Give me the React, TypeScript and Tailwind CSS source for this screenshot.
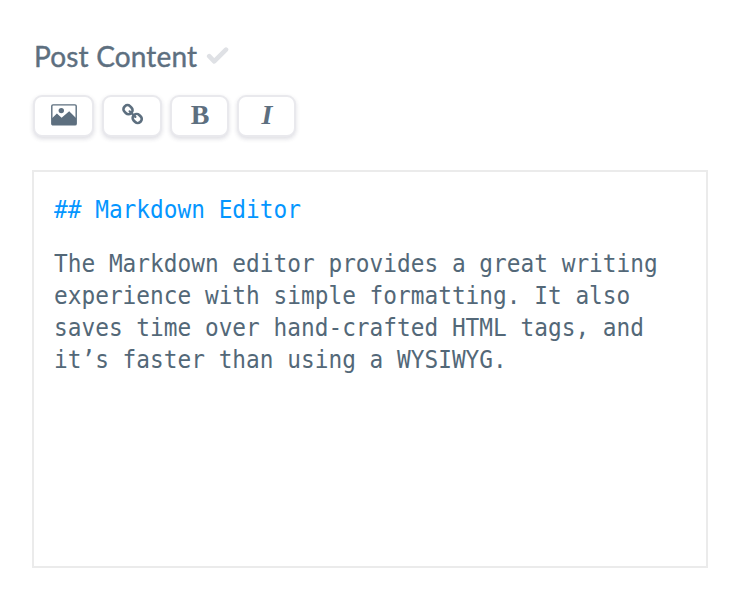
import type { ReactNode } from "react";

function ToolButton({ label, className, children }: { label: string; className: string; children: ReactNode }) {
  return (
    <button
      aria-label={label}
      className={`flex h-[42px] items-start justify-center rounded-[9px] border-2 border-[#e9e9ed] bg-white text-[#5d6f7f] shadow-[0_2px_4px_rgba(50,50,80,0.16)] ${className}`}
    >
      {children}
    </button>
  );
}

function ImageIcon() {
  return (
    <svg className="mt-[7px] h-[22px] w-[26px]" viewBox="0 0 26 22" fill="currentColor">
      <rect x="0.8" y="0.9" width="24.4" height="20" rx="1.2" fill="none" stroke="currentColor" strokeWidth="1.4" />
      <circle cx="10.3" cy="6.6" r="2.7" />
      <path d="M1 14.2 5.9 9.6l4.7 4.2 7.6-6.5 6.8 6.6V21H1Z" />
    </svg>
  );
}

function LinkIcon() {
  return (
    <svg className="mt-[5px] h-[24px] w-[24px]" viewBox="0 0 24 24" fill="none" stroke="currentColor" strokeWidth="2.6">
      <rect x="3.4" y="3.8" width="9.2" height="7.8" rx="3.5" transform="rotate(45 8 7.7)" />
      <rect x="12.6" y="12.6" width="9.2" height="7.8" rx="3.5" transform="rotate(45 17.2 16.5)" />
      <path d="m9.6 9.3 5.8 5.6" strokeWidth="2.2" strokeLinecap="round" />
    </svg>
  );
}

export default function App() {
  return (
    <main className="flex h-[600px] w-[738px] flex-col bg-white px-8 pt-[36px]">
      <div className="flex h-10 items-center pl-[2px]">
        <h1 className="-mt-px w-[171px] whitespace-nowrap font-['Lato',sans-serif] text-[28px] leading-10 font-normal tracking-[0.17px] text-[#5d6f7f] [-webkit-text-stroke:0.4px_#5d6f7f]">
          Post Content
        </h1>
        <svg className="h-5 w-6" viewBox="0 0 24 20" fill="none" stroke="#dfe1e5" strokeWidth="4.6" strokeLinecap="round" strokeLinejoin="round">
          <path d="m4.2 10.2 5 5.2L21 3.6" />
        </svg>
      </div>
      <div className="mt-[19px] flex gap-2 pl-px">
        <ToolButton label="Image" className="w-[61px]"><ImageIcon /></ToolButton>
        <ToolButton label="Link" className="w-[60px]"><LinkIcon /></ToolButton>
        <ToolButton label="Bold" className="w-[59px]">
          <span className="pl-px font-['Liberation_Serif',serif] text-[28px] leading-[36px] font-bold">B</span>
        </ToolButton>
        <ToolButton label="Italic" className="w-[59px]">
          <span className="pl-px font-['Liberation_Serif',serif] text-[28px] leading-[36px] font-bold italic">I</span>
        </ToolButton>
      </div>
      <section className="mt-[33px] h-[398px] w-[676px] overflow-hidden border-2 border-[#ebebeb] pt-[22px] pl-5">
        <div className="w-[700px] origin-left scale-x-[0.9116] font-['DejaVu_Sans_Mono',monospace] text-[25px] leading-8 whitespace-nowrap text-[#536878]">
          <h2 className="text-[#0496ff]">## Markdown Editor</h2>
          <p className="mt-[22px]">
            The Markdown editor provides a great writing<br />
            experience with simple formatting. It also<br />
            saves time over hand-crafted HTML tags, and<br />
            it’s faster than using a WYSIWYG.
          </p>
        </div>
      </section>
    </main>
  );
}
